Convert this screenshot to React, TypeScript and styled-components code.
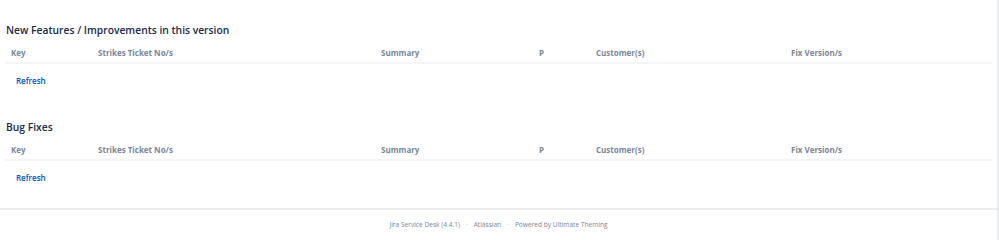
import styled, { createGlobalStyle } from "styled-components";

const GlobalStyle = createGlobalStyle`
  html, body {
    margin: 0;
    padding: 0;
    background: #ffffff;
  }
  body {
    font-family: "Open Sans", "Noto Sans", sans-serif;
  }
`;

const columns = [
  "Key",
  "Strikes Ticket No/s",
  "Summary",
  "P",
  "Customer(s)",
  "Fix Version/s",
];

const sections = [
  "New Features / Improvements in this version",
  "Bug Fixes",
];

const App = () => {
  return (
    <>
      <GlobalStyle />
      <Page>
        <Content>
          {sections.map((title) => (
            <Section key={title}>
              <Heading>{title}</Heading>
              <HeaderRow>
                {columns.map((col) => (
                  <HeaderCell key={col}>{col}</HeaderCell>
                ))}
              </HeaderRow>
              <RefreshLink href="#">Refresh</RefreshLink>
            </Section>
          ))}
        </Content>
        <Footer>
          <FooterItem>Jira Service Desk (4.4.1)</FooterItem>
          <Dot>·</Dot>
          <FooterItem>Atlassian</FooterItem>
          <Dot>·</Dot>
          <FooterItem>Powered by Ultimate Theming</FooterItem>
        </Footer>
      </Page>
    </>
  );
};

export default App;

const Page = styled.div`
  width: 997px;
  height: 240px;
  border-right: 2px solid #ebecf0;
  display: flex;
  flex-direction: column;
`;

const Content = styled.main`
  padding: 21px 5px 0 5px;
  display: flex;
  flex-direction: column;
  gap: 31px;
`;

const Section = styled.section`
  display: flex;
  flex-direction: column;
  align-items: flex-start;
  width: 987px;
`;

const Heading = styled.h2`
  margin: 0;
  font-size: 10.3px;
  font-weight: 600;
  color: #172b4d;
  line-height: 18px;
  padding-left: 1px;
`;

const HeaderRow = styled.div`
  display: grid;
  grid-template-columns: 87px 283px 158px 57px 195px 207px;
  border-bottom: 2px solid #f4f5f7;
  height: 20px;
  align-items: center;
  margin-top: 3px;
`;

const HeaderCell = styled.div`
  padding-left: 6px;
  font-size: 8px;
  font-weight: 700;
  color: #7a869a;
  white-space: nowrap;
`;

const RefreshLink = styled.a`
  margin: 11px 0 0 11px;
  font-size: 8px;
  font-weight: 600;
  color: #0052cc;
  text-decoration: none;
  line-height: 12px;
`;

const Footer = styled.footer`
  margin-top: auto;
  height: 29px;
  border-top: 2px solid #ebecf0;
  display: flex;
  justify-content: center;
  align-items: center;
  gap: 6px;
  font-size: 6.6px;
  color: #7a869a;
  padding-bottom: 1px;
`;

const FooterItem = styled.span``;

const Dot = styled.span`
  color: #a5adba;
`;
